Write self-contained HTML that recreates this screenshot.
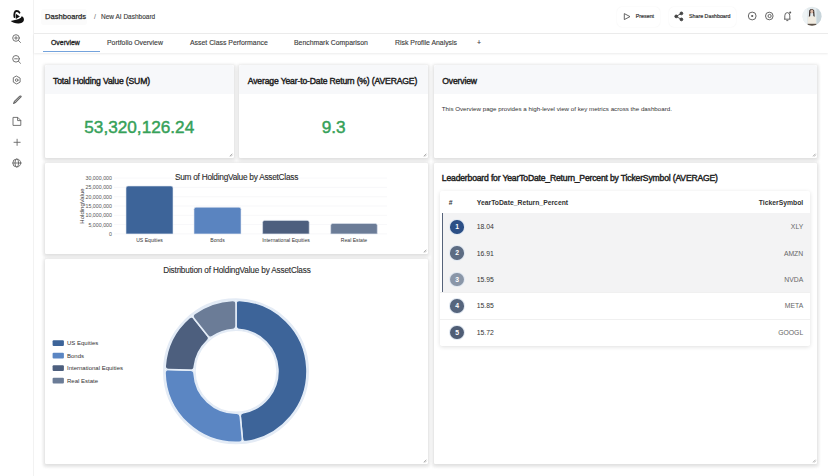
<!DOCTYPE html>
<html><head><meta charset="utf-8">
<style>
*{box-sizing:border-box;margin:0;padding:0}
html,body{width:828px;height:476px;overflow:hidden;background:#fff;font-family:"Liberation Sans",sans-serif;color:#222}
.abs{position:absolute}
#side{position:absolute;left:0;top:0;width:34px;height:476px;background:#fff;border-right:1px solid #f2f2f2}
#hdr{position:absolute;left:34px;top:0;width:794px;height:34px;border-bottom:1px solid #ececec;background:#fff}
#tabs{position:absolute;left:34px;top:34px;width:794px;height:19px;background:#fff;box-shadow:0 1px 2px rgba(0,0,0,0.08)}
.tab{position:absolute;top:4px;font-size:6.9px;color:#3a3a3a;white-space:nowrap;line-height:9px;-webkit-text-stroke:0.12px #3a3a3a}
.card{position:absolute;background:#fff;border-radius:1px;box-shadow:0 0 1px rgba(0,0,0,0.07),0 1px 3px 2px rgba(0,0,0,0.08),0 2px 5px rgba(0,0,0,0.05)}
.ch{position:absolute;left:0;top:0;right:0;height:28.8px;background:#f7f8fa;border-radius:3px 3px 0 0}
.ct{position:absolute;left:8.5px;top:11px;font-size:8.6px;color:#1e1e1e;white-space:nowrap;line-height:10px;letter-spacing:-0.15px;-webkit-text-stroke:0.42px #1e1e1e}
.big{position:absolute;left:0;right:0;text-align:center;color:#36a159;font-size:17.2px;line-height:20px;-webkit-text-stroke:0.45px #36a159}
.grip{position:absolute;right:2px;bottom:2px;width:4px;height:4px}
</style></head><body>
<div id="side">
  <svg class="abs" style="left:0;top:0" width="34" height="180" viewBox="0 0 34 180">
    <g fill="#111">
      <path d="M14.5 17.1 C14 13.6 14.6 11 16.6 11 C18 11 19 11.7 19.5 12.7" fill="none" stroke="#111" stroke-width="1.8" stroke-linecap="round"/>
      <path d="M15.8 13.8 L15.8 18.9 L19.9 16.6 Z"/>
      <path d="M10.7 20.9 C13.6 20.2 16.5 19.6 18.8 18.9 C20.6 18.2 21.4 17.4 21.6 16.3 C23.4 16.8 24.2 18.6 23.9 20.2 C23.4 22.6 20.5 23.6 18.2 23.5 C15 23.3 12.6 22.4 10.7 20.9 Z"/>
    </g>
    <g fill="none" stroke="#666" stroke-width="0.9" stroke-linecap="round">
      <circle cx="16" cy="38" r="3.3"/><line x1="18.4" y1="40.4" x2="20.5" y2="42.5"/>
      <line x1="14.6" y1="38" x2="17.4" y2="38"/><line x1="16" y1="36.6" x2="16" y2="39.4"/>
      <circle cx="16" cy="58.8" r="3.3"/><line x1="18.4" y1="61.2" x2="20.5" y2="63.3"/>
      <line x1="14.6" y1="58.8" x2="17.4" y2="58.8"/>
      <path d="M16.7 76.2 L20.1 78.1 L20.1 82.1 L16.7 84 L13.3 82.1 L13.3 78.1 Z"/>
      <circle cx="16.7" cy="80.1" r="1.3"/>
      <path d="M13.6 103.4 L14.4 101.4 L19.8 96.2 Q20.8 95.6 21.2 96.6 L15.8 102.2 Z" stroke-linejoin="round" stroke-width="1.1"/><line x1="15.2" y1="101.6" x2="19.8" y2="97.2" stroke="#999" stroke-width="0.7"/>
      <path d="M13.4 117.4 H17.8 L20.8 120.4 V125.4 H13.4 Z M17.6 117.6 V120.6 H20.6" stroke-linejoin="round"/>
      <line x1="14" y1="142.3" x2="20.2" y2="142.3"/><line x1="17.1" y1="139.2" x2="17.1" y2="145.4"/>
      <circle cx="16.8" cy="163" r="4"/><ellipse cx="16.8" cy="163" rx="1.8" ry="4"/><line x1="12.8" y1="163" x2="20.8" y2="163"/>
    </g>
  </svg>
</div>
<div id="hdr">
  <div class="abs" style="left:7px;top:9px;width:46px;height:16px;border-radius:3px;background:#fbfbfb"></div>
  <div class="abs" style="left:11px;top:12px;font-size:7.6px;color:#2a2a2a;line-height:10px;-webkit-text-stroke:0.25px #2a2a2a">Dashboards</div>
  <div class="abs" style="left:60px;top:12px;font-size:7px;color:#666;line-height:10px">/</div>
  <div class="abs" style="left:67px;top:12px;font-size:6.5px;color:#3a3a3a;line-height:9px;-webkit-text-stroke:0.12px #3a3a3a">New AI Dashboard</div>
  <div class="abs" style="left:583px;top:7px;width:43px;height:19.5px;border-radius:5px;background:#fff;box-shadow:0 0 1.5px rgba(0,0,0,0.07)"></div>
  <div class="abs" style="left:635px;top:7px;width:67px;height:19.5px;border-radius:5px;background:#fff;box-shadow:0 0 1.5px rgba(0,0,0,0.07)"></div>
  <svg class="abs" style="left:583px;top:0" width="245" height="34" viewBox="617 0 245 34">
    <path d="M624.3 13.6 L630 16.6 L624.3 19.6 Z" fill="none" stroke="#555" stroke-width="0.9" stroke-linejoin="round"/>
    <g fill="#444" stroke="#444" stroke-width="0.9">
      <line x1="676.2" y1="16.4" x2="681.4" y2="13.4"/><line x1="676.2" y1="16.4" x2="681.4" y2="19.4"/>
      <circle cx="676.2" cy="16.4" r="1.4"/><circle cx="681.4" cy="13.4" r="1.4"/><circle cx="681.4" cy="19.4" r="1.4"/>
    </g>
    <g fill="none" stroke="#555" stroke-width="0.9">
      <circle cx="752.2" cy="16" r="3.9"/>
      <circle cx="769.3" cy="16" r="3.8"/><circle cx="769.6" cy="16" r="1.6"/>
      <path d="M784 19.2 H790.5 M784.8 19 V15.8 Q784.8 12.6 787.3 12.6 Q789.8 12.6 789.8 15.8 V19 M786.3 20.6 H788.3"/>
    </g>
    <circle cx="752.2" cy="16" r="1.1" fill="#555"/>
    <circle cx="790.2" cy="12.6" r="1" fill="#555"/>
  </svg>
  <div class="abs" style="left:601.8px;top:12px;font-size:5.3px;color:#333;line-height:8px;-webkit-text-stroke:0.18px #333">Present</div>
  <div class="abs" style="left:655px;top:12px;font-size:5.3px;color:#333;line-height:8px;-webkit-text-stroke:0.18px #333">Share Dashboard</div>
  <svg class="abs" style="left:768px;top:6px" width="20" height="20" viewBox="0 0 20 20">
    <defs><clipPath id="av"><circle cx="10" cy="10.3" r="9.5"/></clipPath></defs>
    <g clip-path="url(#av)">
      <rect width="20" height="20" fill="#e3eaed"/>
      <rect x="0" y="0" width="5" height="20" fill="#eef3f5"/>
      <rect x="14.5" y="0" width="5.5" height="20" fill="#c8d5db"/>
      <path d="M7.2 4.5 Q9.6 1.6 12.2 4.5 L12.8 12.5 L11.5 12.5 L11.2 7 L8.4 7 L8 12.5 L6.8 12.5 Z" fill="#3b2f2b"/>
      <ellipse cx="9.8" cy="5.6" rx="1.5" ry="2" fill="#d9b8a6"/>
      <path d="M5.6 20 L6 11.2 Q9.8 9 13.8 11.2 L14.2 20 Z" fill="#f1ece2"/>
      <rect x="5.5" y="17.8" width="9" height="2.2" fill="#5a5048"/>
    </g>
  </svg>
</div>
<div id="tabs">
  <div class="tab" style="left:17px;color:#222;-webkit-text-stroke:0.3px #222">Overview</div>
  <div class="abs" style="left:9.3px;top:16.5px;width:56.7px;height:1.5px;background:#74a3dc"></div>
  <div class="tab" style="left:73px">Portfolio Overview</div>
  <div class="tab" style="left:156px">Asset Class Performance</div>
  <div class="tab" style="left:260px">Benchmark Comparison</div>
  <div class="tab" style="left:361px">Risk Profile Analysis</div>
  <div class="tab" style="left:443px">+</div>
</div>

<!-- card 1 -->
<div class="card" style="left:44.5px;top:65px;width:189.5px;height:93px">
  <div class="ch"></div>
  <div class="ct">Total Holding Value (SUM)</div>
  <div class="big" style="top:51.5px">53,320,126.24</div>
</div>
<!-- card 2 -->
<div class="card" style="left:239.3px;top:65px;width:188.7px;height:93px">
  <div class="ch"></div>
  <div class="ct">Average Year-to-Date Return (%) (AVERAGE)</div>
  <div class="big" style="top:51.5px">9.3</div>
</div>
<!-- card 3 -->
<div class="card" style="left:433.8px;top:65px;width:383.5px;height:93px">
  <div class="ch"></div>
  <div class="ct">Overview</div>
  <div class="abs" style="left:8px;top:39.6px;font-size:6.2px;color:#333;line-height:8px;white-space:nowrap">This Overview page provides a high-level view of key metrics across the dashboard.</div>
</div>

<!-- card 4 bar -->
<div class="card" style="left:44.5px;top:163px;width:383.5px;height:91px"></div>
<svg class="abs" style="left:0;top:0" width="828" height="476" viewBox="0 0 828 476">
  <g stroke="#f1f2f5" stroke-width="0.6">
    <line x1="114" y1="178.1" x2="387" y2="178.1"/>
    <line x1="114" y1="187.4" x2="387" y2="187.4"/>
    <line x1="114" y1="196.7" x2="387" y2="196.7"/>
    <line x1="114" y1="206.0" x2="387" y2="206.0"/>
    <line x1="114" y1="215.3" x2="387" y2="215.3"/>
    <line x1="114" y1="224.6" x2="387" y2="224.6"/>
    <line x1="114" y1="233.9" x2="387" y2="233.9"/>
  </g>
  <g font-family="Liberation Sans" font-size="5.3" fill="#555" text-anchor="end">
    <text x="112" y="180">30,000,000</text>
    <text x="112" y="189.3">25,000,000</text>
    <text x="112" y="198.6">20,000,000</text>
    <text x="112" y="207.9">15,000,000</text>
    <text x="112" y="217.2">10,000,000</text>
    <text x="112" y="226.5">5,000,000</text>
    <text x="112" y="235.8">0</text>
  </g>
  <text transform="translate(83.5 206) rotate(-90)" font-family="Liberation Sans" font-size="6" fill="#333" text-anchor="middle">HoldingValue</text>
  <text x="236.5" y="179.8" font-family="Liberation Sans" font-size="8.3" letter-spacing="-0.26" fill="#2a2a2a" stroke="#2a2a2a" stroke-width="0.1" text-anchor="middle">Sum of HoldingValue by AssetClass</text>
  <g>
    <path d="M126 233.9 V188 Q126 186 128 186 H171 Q173 186 173 188 V233.9 Z" fill="#3d6499" stroke="#dfe6f0" stroke-width="0.6"/>
    <path d="M194 233.9 V209.3 Q194 207.3 196 207.3 H239 Q241 207.3 241 209.3 V233.9 Z" fill="#5a84c0" stroke="#dfe6f0" stroke-width="0.6"/>
    <path d="M262.6 233.9 V222.4 Q262.6 220.4 264.6 220.4 H307.2 Q309.2 220.4 309.2 222.4 V233.9 Z" fill="#4d5f7e" stroke="#dfe6f0" stroke-width="0.6"/>
    <path d="M330.7 233.9 V225.5 Q330.7 223.5 332.7 223.5 H375.3 Q377.3 223.5 377.3 225.5 V233.9 Z" fill="#6b7c97" stroke="#dfe6f0" stroke-width="0.6"/>
  </g>
  <g font-family="Liberation Sans" font-size="5.1" fill="#333" text-anchor="middle">
    <text x="149.5" y="242.2">US Equities</text>
    <text x="217.5" y="242.2">Bonds</text>
    <text x="286" y="242.2">International Equities</text>
    <text x="354" y="242.2">Real Estate</text>
  </g>
</svg>

<!-- card 5 donut -->
<div class="card" style="left:44.5px;top:258.8px;width:383.5px;height:205.2px"></div>
<svg class="abs" style="left:0;top:0" width="828" height="476" viewBox="0 0 828 476">
  <text x="236.9" y="273.1" font-family="Liberation Sans" font-size="8.2" letter-spacing="-0.16" fill="#2a2a2a" stroke="#2a2a2a" stroke-width="0.1" text-anchor="middle">Distribution of HoldingValue by AssetClass</text>
  <circle cx="236" cy="371.3" r="72" fill="none" stroke="#e4ebf5" stroke-width="2"/>
  <circle cx="236" cy="371.3" r="41" fill="none" stroke="#e4ebf5" stroke-width="1.5"/>
  <g stroke="#e3ecf7" stroke-width="1.6" stroke-linejoin="round">
    <path fill="#3d6499" d="M239.50 300.39 A71 71 0 0 1 246.16 441.57 Q242.69 441.98 242.36 438.50 L240.28 416.60 Q239.96 413.11 243.42 412.64 A42 42 0 0 0 239.50 329.45 Q236.00 329.30 236.00 325.80 L236.00 303.80 Q236.00 300.30 239.50 300.39 Z"/>
    <path fill="#5b86c3" d="M239.19 442.23 A71 71 0 0 1 165.02 372.92 Q165.02 369.42 168.52 369.51 L190.52 370.09 Q194.01 370.19 194.07 373.68 A42 42 0 0 0 236.46 413.30 Q239.96 413.11 240.28 416.60 L242.36 438.50 Q242.69 441.98 239.19 442.23 Z"/>
    <path fill="#4d5f7e" d="M165.20 365.92 A71 71 0 0 1 189.12 317.98 Q191.80 315.73 193.98 318.47 L207.68 335.69 Q209.85 338.43 207.21 340.72 A42 42 0 0 0 194.25 366.70 Q194.01 370.19 190.52 370.09 L168.52 369.51 Q165.02 369.42 165.20 365.92 Z"/>
    <path fill="#6b7c97" d="M194.59 313.62 A71 71 0 0 1 232.50 300.39 Q236.00 300.30 236.00 303.80 L236.00 325.80 Q236.00 329.30 232.50 329.45 A42 42 0 0 0 212.68 336.37 Q209.85 338.43 207.68 335.69 L193.98 318.47 Q191.80 315.73 194.59 313.62 Z"/>
  </g>
  <g>
    <rect x="52.6" y="340.2" width="11.3" height="5.8" rx="1" fill="#3d6499"/>
    <rect x="52.6" y="352.7" width="11.3" height="5.8" rx="1" fill="#5b86c3"/>
    <rect x="52.6" y="365.2" width="11.3" height="5.8" rx="1" fill="#4d5f7e"/>
    <rect x="52.6" y="377.7" width="11.3" height="5.8" rx="1" fill="#6b7c97"/>
  </g>
  <g font-family="Liberation Sans" font-size="6" fill="#333">
    <text x="67" y="345.2">US Equities</text>
    <text x="67" y="357.7">Bonds</text>
    <text x="67" y="370.2">International Equities</text>
    <text x="67" y="382.7">Real Estate</text>
  </g>
</svg>

<!-- card 6 leaderboard -->
<div class="card" style="left:433.8px;top:163px;width:383.5px;height:301px">
  <div class="ct" style="left:8px;top:9.5px;letter-spacing:-0.17px">Leaderboard for YearToDate_Return_Percent by TickerSymbol (AVERAGE)</div>
  <div class="abs" style="left:6px;top:28.4px;width:370.4px;height:154.2px;background:#fff;border-radius:2px;box-shadow:0 1px 4px rgba(0,0,0,0.13)">
    <div class="abs" style="left:9px;top:7px;font-size:6.8px;font-weight:bold;color:#333;line-height:9px">#</div>
    <div class="abs" style="left:37px;top:7px;font-size:6.8px;font-weight:bold;color:#333;line-height:9px">YearToDate_Return_Percent</div>
    <div class="abs" style="right:7px;top:7px;font-size:6.8px;font-weight:bold;color:#333;line-height:9px">TickerSymbol</div>
    <div class="abs" style="left:2px;top:21.9px;width:368.4px;height:26.4px;background:#f3f3f4;border-left:1.4px solid #56637a"></div>
<div class="abs" style="left:10.5px;top:28.7px;width:13.5px;height:13.5px;border-radius:50%;background:#2c4f86;color:#fff;font-size:6.8px;font-weight:bold;text-align:center;line-height:13.5px;box-shadow:0 0 0 1px #e1e8f1">1</div>
<div class="abs" style="left:37px;top:30.9px;font-size:6.8px;color:#333;line-height:9px">18.04</div>
<div class="abs" style="right:7px;top:30.9px;font-size:6.8px;color:#666;line-height:9px">XLY</div>
<div class="abs" style="left:2px;top:48.3px;width:368.4px;height:26.4px;background:#f3f3f4;border-left:1.4px solid #56637a"></div>
<div class="abs" style="left:10.5px;top:55.1px;width:13.5px;height:13.5px;border-radius:50%;background:#5d6c83;color:#fff;font-size:6.8px;font-weight:bold;text-align:center;line-height:13.5px;box-shadow:0 0 0 1px #e1e8f1">2</div>
<div class="abs" style="left:37px;top:57.3px;font-size:6.8px;color:#333;line-height:9px">16.91</div>
<div class="abs" style="right:7px;top:57.3px;font-size:6.8px;color:#666;line-height:9px">AMZN</div>
<div class="abs" style="left:2px;top:74.7px;width:368.4px;height:26.4px;background:#f3f3f4;border-left:1.4px solid #56637a"></div>
<div class="abs" style="left:10.5px;top:81.5px;width:13.5px;height:13.5px;border-radius:50%;background:#8a96a8;color:#fff;font-size:6.8px;font-weight:bold;text-align:center;line-height:13.5px;box-shadow:0 0 0 1px #e1e8f1">3</div>
<div class="abs" style="left:37px;top:83.7px;font-size:6.8px;color:#333;line-height:9px">15.95</div>
<div class="abs" style="right:7px;top:83.7px;font-size:6.8px;color:#666;line-height:9px">NVDA</div>
<div class="abs" style="left:0;top:101.1px;width:370.4px;height:26.4px;background:#fff;border-top:1px solid #f0f0f0"></div>
<div class="abs" style="left:10.5px;top:107.9px;width:13.5px;height:13.5px;border-radius:50%;background:#56657d;color:#fff;font-size:6.8px;font-weight:bold;text-align:center;line-height:13.5px;box-shadow:0 0 0 1px #e1e8f1">4</div>
<div class="abs" style="left:37px;top:110.1px;font-size:6.8px;color:#333;line-height:9px">15.85</div>
<div class="abs" style="right:7px;top:110.1px;font-size:6.8px;color:#666;line-height:9px">META</div>
<div class="abs" style="left:0;top:127.5px;width:370.4px;height:26.4px;background:#fff;border-top:1px solid #f0f0f0"></div>
<div class="abs" style="left:10.5px;top:134.3px;width:13.5px;height:13.5px;border-radius:50%;background:#4f5d75;color:#fff;font-size:6.8px;font-weight:bold;text-align:center;line-height:13.5px;box-shadow:0 0 0 1px #e1e8f1">5</div>
<div class="abs" style="left:37px;top:136.5px;font-size:6.8px;color:#333;line-height:9px">15.72</div>
<div class="abs" style="right:7px;top:136.5px;font-size:6.8px;color:#666;line-height:9px">GOOGL</div>
  </div>
</div>
<svg class="abs" style="left:0;top:0" width="828" height="476"><g stroke="#9a9a9a" stroke-width="0.8" stroke-linecap="round"><line x1="230.0" y1="156.0" x2="232.0" y2="154.0"/><line x1="231.0" y1="156.4" x2="232.4" y2="155.0" stroke-width="0.6"/><line x1="424.0" y1="156.0" x2="426.0" y2="154.0"/><line x1="425.0" y1="156.4" x2="426.4" y2="155.0" stroke-width="0.6"/><line x1="813.3" y1="156.0" x2="815.3" y2="154.0"/><line x1="814.3" y1="156.4" x2="815.7" y2="155.0" stroke-width="0.6"/><line x1="424.0" y1="252.0" x2="426.0" y2="250.0"/><line x1="425.0" y1="252.4" x2="426.4" y2="251.0" stroke-width="0.6"/><line x1="424.0" y1="462.0" x2="426.0" y2="460.0"/><line x1="425.0" y1="462.4" x2="426.4" y2="461.0" stroke-width="0.6"/><line x1="813.3" y1="462.0" x2="815.3" y2="460.0"/><line x1="814.3" y1="462.4" x2="815.7" y2="461.0" stroke-width="0.6"/></g></svg>
</body></html>
